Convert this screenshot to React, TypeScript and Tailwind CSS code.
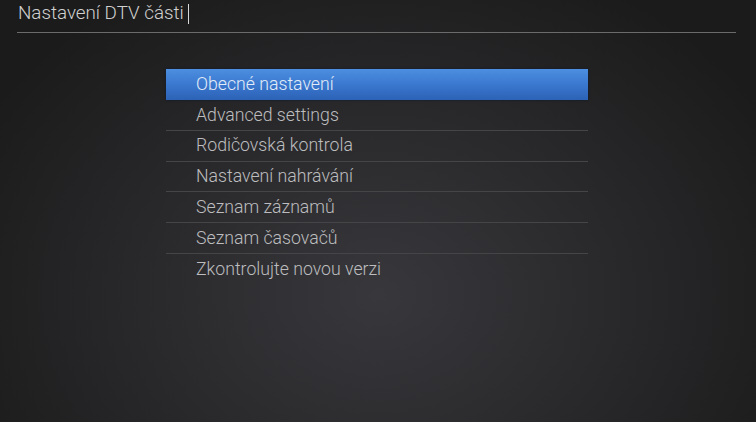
import React from "react";

const items = [
  "Advanced settings",
  "Rodičovská kontrola",
  "Nastavení nahrávání",
  "Seznam záznamů",
  "Seznam časovačů",
  "Zkontrolujte novou verzi",
];

export default function App() {
  return (
    <div
      className="w-[756px] h-[422px] overflow-hidden bg-[radial-gradient(ellipse_60%_85%_at_50%_70%,#38383c_0%,#2b2b2e_45%,#1b1b1b_100%)] font-['Roboto','Liberation_Sans',sans-serif] font-light"
    >
      <div className="ml-[17px] mr-[20px] h-[33px] border-b border-[#6b6b6b] flex items-start pt-[2px]">
        <span className="ml-[1px] text-[18.8px] leading-[22px] text-[#d0d0d0]">Nastavení DTV části</span>
        <span className="ml-[4px] mt-[2px] w-px h-[20px] bg-[#d8d8d8]" />
      </div>
      <div className="ml-[166px] w-[422px] mt-[36px] flex flex-col">
        <div className="h-[31px] flex items-center pl-[30px] bg-gradient-to-b from-[#4d8fe0] via-[#3a78cf] to-[#2c62b6] shadow-[0_0_2px_#0a1830] text-[17.7px] text-[#e2ecf8]">
          Obecné nastavení
        </div>
        {items.map((t, i) => (
          <div
            key={t}
            className={
              i < items.length - 1
                ? "h-[30.8px] flex items-center pl-[30px] border-b border-[#454548] text-[17.7px] text-[#bdbdbf]"
                : "h-[30.8px] flex items-center pl-[30px] text-[17.7px] text-[#bdbdbf]"
            }
          >
            {t}
          </div>
        ))}
      </div>
    </div>
  );
}
